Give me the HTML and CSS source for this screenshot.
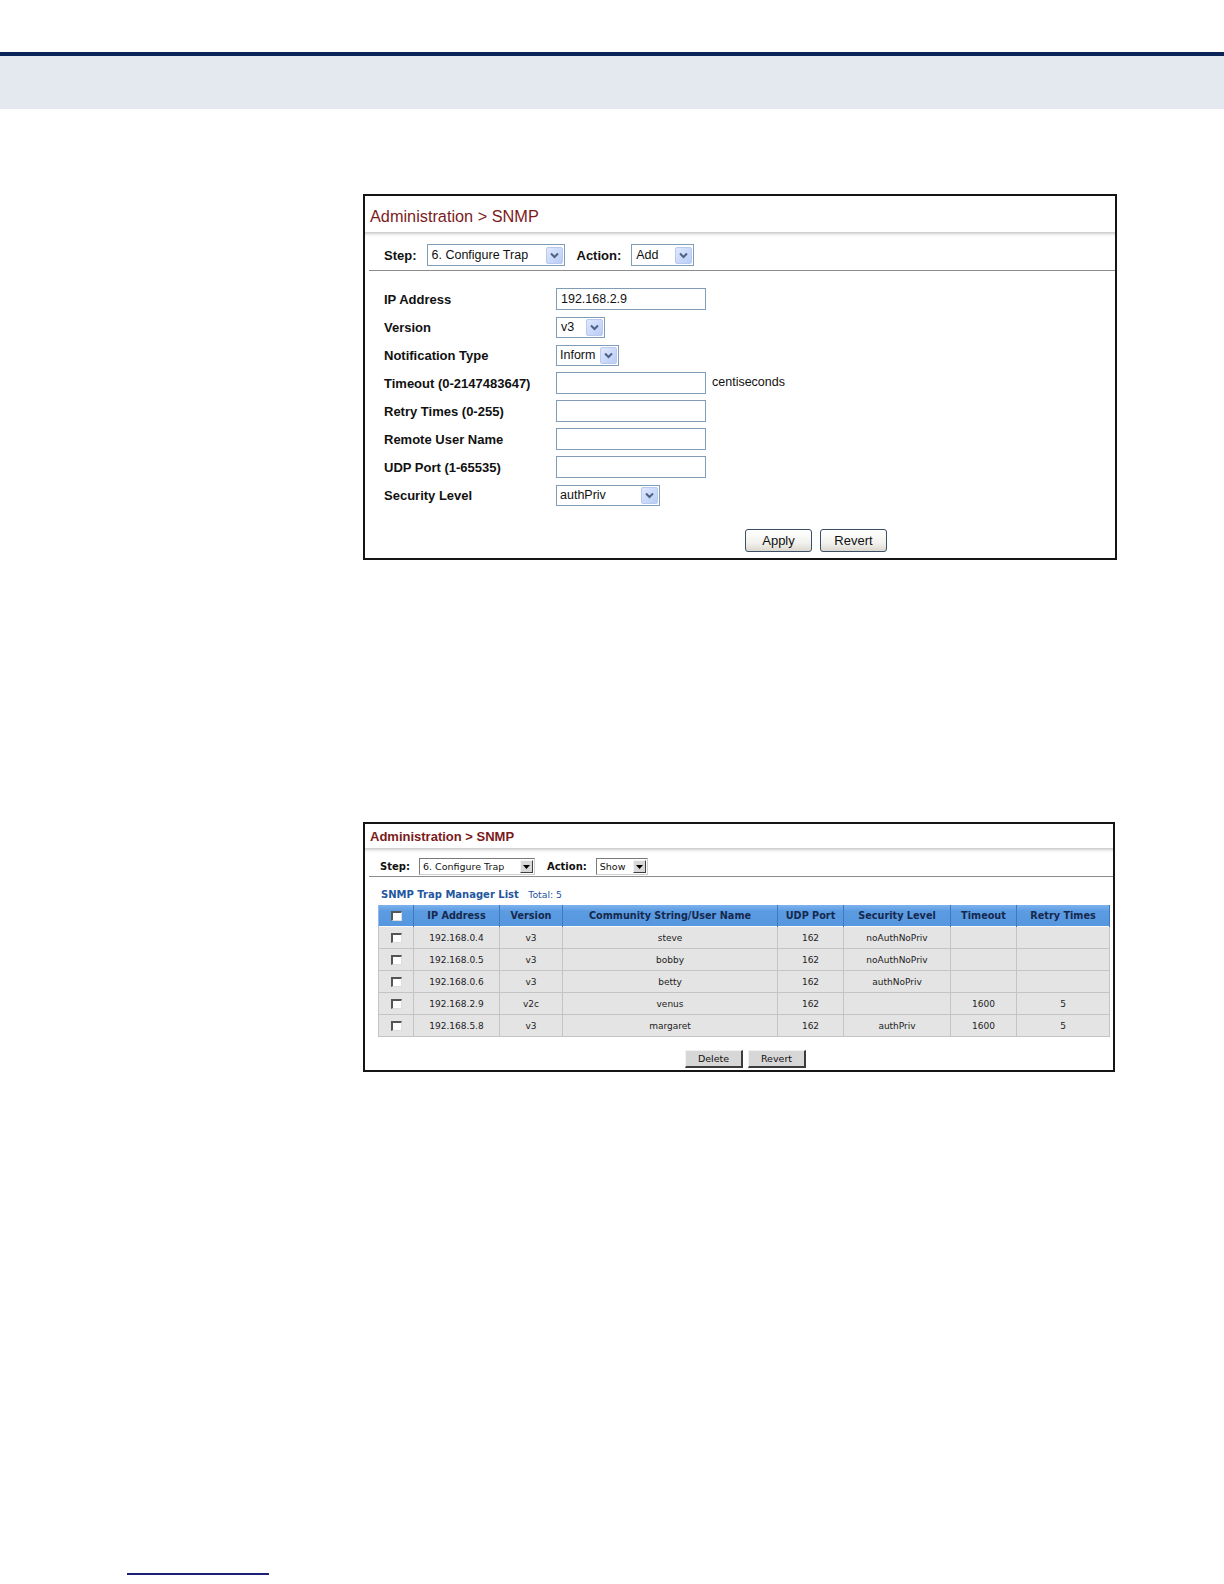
FILE: index.html
```html
<!DOCTYPE html>
<html lang="en">
<head>
  <meta charset="UTF-8">
  <meta name="viewport" content="width=device-width, initial-scale=1.0">
  <title>Administration &gt; SNMP</title>
  <link rel="stylesheet" href="styles.css">
</head>
<body>
  <div class="topRule"></div>
  <div class="topBand"></div>

  <div class="content">
    <!-- 配置 trap -->
    <div class="panel" id="panelAdd">
      <div class="title">Administration &gt; SNMP</div>
      <div class="shade"></div>
      <div class="stepRow">
        <span class="stepLabel">Step:</span>
        <div class="xpSelect" id="stepSelect">
          <span>6. Configure Trap</span>
          <i class="xpArrow"><svg width="9" height="7" viewBox="0 0 9 7"><path d="M1 1.5 L4.5 5 L8 1.5" fill="none" stroke="#4d6185" stroke-width="2"/></svg></i>
        </div>
        <span class="stepLabel actionLabel">Action:</span>
        <div class="xpSelect" id="actionSelect">
          <span>Add</span>
          <i class="xpArrow"><svg width="9" height="7" viewBox="0 0 9 7"><path d="M1 1.5 L4.5 5 L8 1.5" fill="none" stroke="#4d6185" stroke-width="2"/></svg></i>
        </div>
      </div>

      <div class="form">
        <div class="row">
          <div class="label">IP Address</div>
          <div class="input">192.168.2.9</div>
        </div>
        <div class="row">
          <div class="label">Version</div>
          <div class="xpSelect small" id="versionSelect">
            <span>v3</span>
            <i class="xpArrow"><svg width="9" height="7" viewBox="0 0 9 7"><path d="M1 1.5 L4.5 5 L8 1.5" fill="none" stroke="#4d6185" stroke-width="2"/></svg></i>
          </div>
        </div>
        <div class="row">
          <div class="label">Notification Type</div>
          <div class="xpSelect small" id="typeSelect">
            <span>Inform</span>
            <i class="xpArrow"><svg width="9" height="7" viewBox="0 0 9 7"><path d="M1 1.5 L4.5 5 L8 1.5" fill="none" stroke="#4d6185" stroke-width="2"/></svg></i>
          </div>
        </div>
        <div class="row">
          <div class="label">Timeout (0-2147483647)</div>
          <div class="input"></div>
          <div class="unit">centiseconds</div>
        </div>
        <div class="row">
          <div class="label">Retry Times (0-255)</div>
          <div class="input"></div>
        </div>
        <div class="row">
          <div class="label">Remote User Name</div>
          <div class="input"></div>
        </div>
        <div class="row">
          <div class="label">UDP Port (1-65535)</div>
          <div class="input"></div>
        </div>
        <div class="row">
          <div class="label">Security Level</div>
          <div class="xpSelect small" id="levelSelect">
            <span>authPriv</span>
            <i class="xpArrow"><svg width="9" height="7" viewBox="0 0 9 7"><path d="M1 1.5 L4.5 5 L8 1.5" fill="none" stroke="#4d6185" stroke-width="2"/></svg></i>
          </div>
        </div>
      </div>

      <div class="buttons">
        <div class="xpButton">Apply</div>
        <div class="xpButton">Revert</div>
      </div>
    </div>

    <!-- trap 列表 -->
    <div class="panel" id="panelShow">
      <div class="title small">Administration &gt; SNMP</div>
      <div class="shade"></div>
      <div class="stepRow small">
        <span class="stepLabel">Step:</span>
        <div class="oldSelect" id="stepSelect2">
          <span>6. Configure Trap</span>
          <i class="oldArrow"><svg width="7" height="4" viewBox="0 0 7 4"><path d="M0 0 H7 L3.5 4 Z" fill="#000"/></svg></i>
        </div>
        <span class="stepLabel actionLabel">Action:</span>
        <div class="oldSelect" id="actionSelect2">
          <span>Show</span>
          <i class="oldArrow"><svg width="7" height="4" viewBox="0 0 7 4"><path d="M0 0 H7 L3.5 4 Z" fill="#000"/></svg></i>
        </div>
      </div>

      <div class="listTitle">SNMP Trap Manager List <span class="total">Total: 5</span></div>

      <table class="list">
        <thead>
          <tr>
            <th class="colCheck"><i class="check"></i></th>
            <th class="colIp">IP Address</th>
            <th class="colVer">Version</th>
            <th class="colName">Community String/User Name</th>
            <th class="colPort">UDP Port</th>
            <th class="colLevel">Security Level</th>
            <th class="colTime">Timeout</th>
            <th class="colRetry">Retry Times</th>
          </tr>
        </thead>
        <tbody>
          <tr><td><i class="check"></i></td><td>192.168.0.4</td><td>v3</td><td>steve</td><td>162</td><td>noAuthNoPriv</td><td></td><td></td></tr>
          <tr><td><i class="check"></i></td><td>192.168.0.5</td><td>v3</td><td>bobby</td><td>162</td><td>noAuthNoPriv</td><td></td><td></td></tr>
          <tr><td><i class="check"></i></td><td>192.168.0.6</td><td>v3</td><td>betty</td><td>162</td><td>authNoPriv</td><td></td><td></td></tr>
          <tr><td><i class="check"></i></td><td>192.168.2.9</td><td>v2c</td><td>venus</td><td>162</td><td></td><td>1600</td><td>5</td></tr>
          <tr><td><i class="check"></i></td><td>192.168.5.8</td><td>v3</td><td>margaret</td><td>162</td><td>authPriv</td><td>1600</td><td>5</td></tr>
        </tbody>
      </table>

      <div class="buttons small">
        <div class="oldButton">Delete</div>
        <div class="oldButton">Revert</div>
      </div>
    </div>
  </div>

  <div class="footRule"></div>
</body>
</html>
```

FILE: styles.css
```css
body {
  margin: 0;
  background-color: #FFFFFF;
  font-family: "Liberation Sans", Arial, sans-serif;
  color: #111;
}

/* 页头 */
.topRule {
  margin-top: 52px;
  height: 4px;
  background-color: #0b2458;
}
.topBand {
  height: 53px;
  background-color: #e4e8ef;
}

.content {
  padding: 85px 0 0 363px;
}

.footRule {
  margin: 501px 0 0 127px;
  width: 142px;
  height: 2px;
  background-color: #1b1f78;
}

/* 面板 */
.panel {
  box-sizing: border-box;
  border: 2px solid #151515;
  background: #fff;
}
#panelAdd {
  width: 754px;
  height: 366px;
}
#panelShow {
  margin-top: 262px;
  width: 752px;
  height: 250px;
}

.title {
  padding: 4px 0 0 5px;
  height: 32px;
  line-height: 32px;
  font-size: 16.3px;
  color: #7b1b1b;
}
.title.small {
  padding: 2px 0 0 5px;
  height: 22px;
  line-height: 22px;
  font-size: 13px;
  font-weight: bold;
}
.shade {
  height: 5px;
  background: linear-gradient(#c9c9c9, #f4f4f4 60%, #fff);
}

.stepRow {
  box-sizing: border-box;
  display: flex;
  align-items: center;
  height: 34px;
  padding: 3px 0 0 15px;
  margin-left: 4px;
  border-bottom: 1px solid #8c8c8c;
  font-size: 13px;
}
.stepRow.small {
  height: 24px;
  padding: 4px 0 0 11px;
  font-size: 10px;
  font-family: "DejaVu Sans", Verdana, sans-serif;
}
.stepLabel {
  font-weight: bold;
  margin-right: 10px;
}
.stepRow.small .stepLabel {
  margin-right: 9px;
}
.actionLabel {
  margin-left: 12px;
}

/* XP 下拉框 */
.xpSelect {
  box-sizing: border-box;
  display: flex;
  align-items: center;
  justify-content: space-between;
  height: 21px;
  border: 1px solid #7f9db9;
  background: #fff;
  padding: 1px 1px 1px 4px;
  font-size: 12.5px;
}
.stepRow .xpSelect {
  height: 22px;
}
.xpArrow {
  box-sizing: border-box;
  display: flex;
  align-items: center;
  justify-content: center;
  width: 17px;
  height: 17px;
  border: 1px solid #b9c9ef;
  border-radius: 2px;
  background: linear-gradient(135deg, #dfe8fd, #b9cdf7);
}
#stepSelect { width: 138px; }
#actionSelect { width: 63px; }
#versionSelect { width: 49px; }
#typeSelect { width: 63px; padding-left: 3px; }
#levelSelect { width: 104px; padding-left: 3px; }

/* 表单 */
.form {
  padding: 14px 0 0 19px;
}
.row {
  display: flex;
  align-items: center;
  height: 28px;
}
.label {
  width: 172px;
  font-size: 13px;
  font-weight: bold;
}
.input {
  box-sizing: border-box;
  width: 150px;
  height: 22px;
  border: 1px solid #7f9db9;
  padding: 3px 4px;
  font-size: 12.5px;
}
.unit {
  margin-left: 6px;
  margin-top: -2px;
  font-size: 12.5px;
}

.buttons {
  display: flex;
  gap: 8px;
  padding: 20px 0 0 380px;
}
.xpButton {
  box-sizing: border-box;
  width: 67px;
  height: 23px;
  line-height: 21px;
  text-align: center;
  font-size: 13px;
  border: 1px solid #3c5068;
  border-radius: 3px;
  background: linear-gradient(#ffffff, #f2f2ee 60%, #dcd8cf);
}

/* 旧式下拉框 */
.oldSelect {
  box-sizing: border-box;
  display: flex;
  align-items: center;
  justify-content: space-between;
  height: 17px;
  border: 1px solid #7a7a7a;
  border-right-color: #d0d0d0;
  border-bottom-color: #d0d0d0;
  padding: 0 1px 0 3px;
  font-size: 9.5px;
}
.oldArrow {
  box-sizing: border-box;
  display: flex;
  align-items: center;
  justify-content: center;
  width: 13px;
  height: 13px;
  background: #d8d8d8;
  border: 1px solid #f4f4f4;
  border-right-color: #404040;
  border-bottom-color: #404040;
}
#stepSelect2 { width: 116px; }
#actionSelect2 { width: 52px; }

/* 列表 */
.listTitle {
  padding: 10px 0 2px 16px;
  line-height: 16px;
  font-family: "DejaVu Sans", Verdana, sans-serif;
  font-size: 10px;
  font-weight: bold;
  color: #1f56a0;
}
.total {
  margin-left: 6px;
  font-size: 9.3px;
  font-weight: normal;
  color: #1f56a0;
}

.list {
  margin-left: 13px;
  width: 731px;
  border-collapse: collapse;
  table-layout: fixed;
  font-family: "DejaVu Sans", Verdana, sans-serif;
  text-align: center;
}
.list th {
  height: 21px;
  padding: 0;
  background: linear-gradient(#7db2ee, #5b9be2 30%, #5696de);
  border-left: 1px solid #8fb9ea;
  border-right: 1px solid #3f78bd;
  font-size: 9.7px;
  font-weight: bold;
  color: #15284d;
}
.list td {
  height: 21px;
  padding: 0;
  background: #e4e4e4;
  border: 1px solid #c4c4c4;
  border-top-color: #fafafa;
  font-size: 9px;
  color: #222;
}
.colCheck { width: 34px; }
.colIp { width: 85px; }
.colVer { width: 62px; }
.colName { width: 214px; }
.colPort { width: 65px; }
.colLevel { width: 106px; }
.colTime { width: 65px; }
.colRetry { width: 92px; }

.check {
  display: inline-block;
  vertical-align: middle;
  box-sizing: border-box;
  width: 11px;
  height: 10px;
  background: #fff;
  border: 1px solid #ddd;
  border-top: 2px solid #555;
  border-left: 2px solid #555;
}

.buttons.small {
  gap: 5px;
  padding: 13px 0 0 320px;
}
.oldButton {
  box-sizing: border-box;
  width: 58px;
  height: 18px;
  line-height: 16px;
  text-align: center;
  font-family: "DejaVu Sans", Verdana, sans-serif;
  font-size: 9.5px;
  background: #d7d7d7;
  border: 1px solid #f2f2f2;
  border-right: 2px solid #3c3c3c;
  border-bottom: 2px solid #3c3c3c;
}
```
